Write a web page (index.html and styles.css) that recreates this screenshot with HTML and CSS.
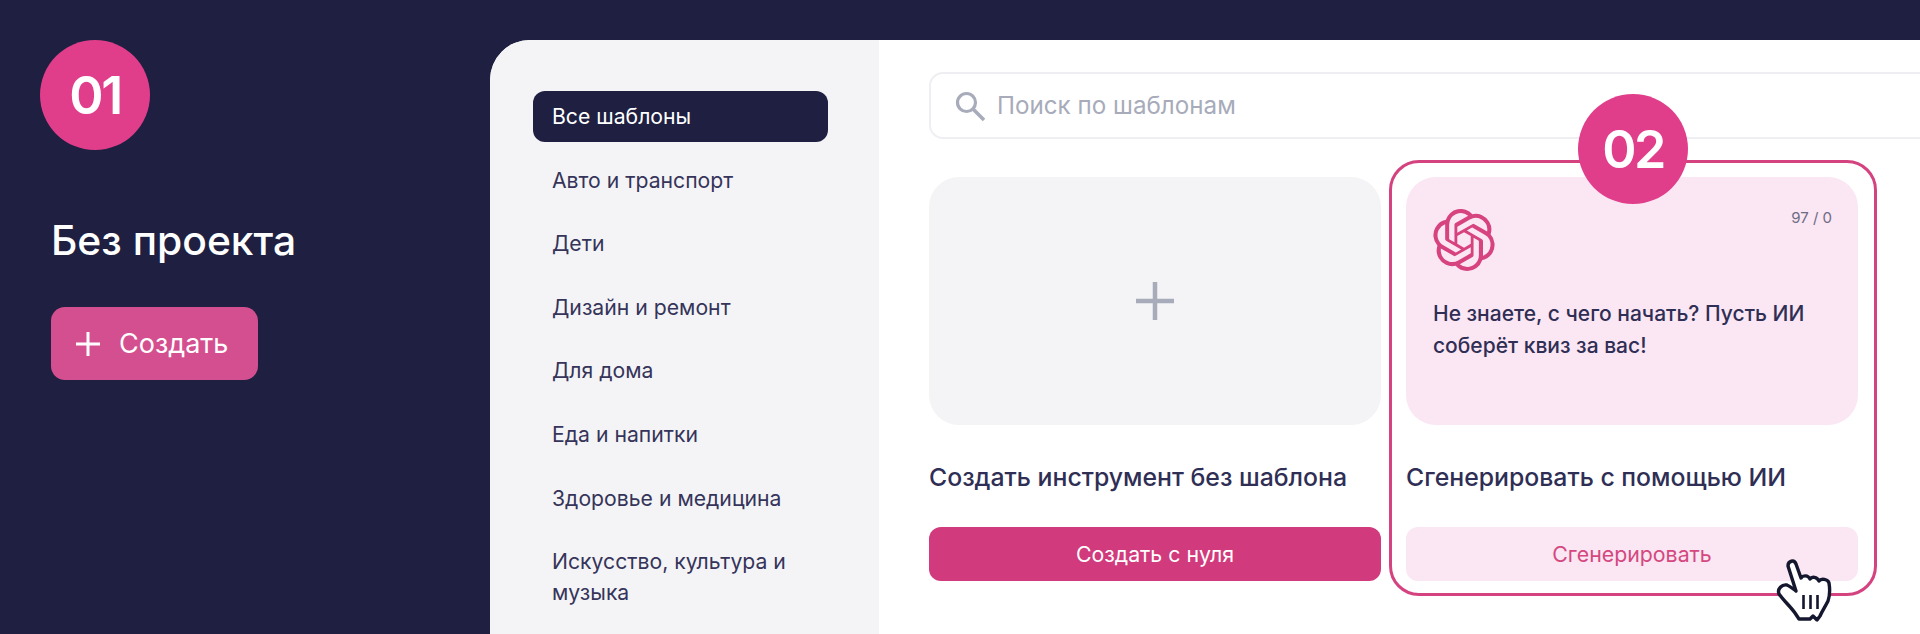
FILE: index.html
```html
<!DOCTYPE html>
<html lang="ru">
<head>
    <meta charset="UTF-8">
    <title>Без проекта</title>
    <link rel="stylesheet" href="styles.css">
</head>
<body>
    <div class="app">
        <aside class="project">
            <div class="step step-first">01</div>
            <h1>Без проекта</h1>
            <button class="create">
                <svg width="26" height="26" viewBox="0 0 26 26"><path d="M13 1v24M1 13h24" stroke="#fff" stroke-width="3" fill="none"/></svg>
                <span>Создать</span>
            </button>
        </aside>

        <main class="panel">
            <nav class="categories">
                <a class="category active">Все шаблоны</a>
                <a class="category">Авто и транспорт</a>
                <a class="category">Дети</a>
                <a class="category">Дизайн и ремонт</a>
                <a class="category">Для дома</a>
                <a class="category">Еда и напитки</a>
                <a class="category">Здоровье и медицина</a>
                <a class="category">Искусство, культура и музыка</a>
            </nav>

            <section class="content">
                <div class="search">
                    <svg width="32" height="32" viewBox="0 0 32 32"><circle cx="12.5" cy="12.5" r="9" stroke="#a7abba" stroke-width="3.2" fill="none"/><path d="M19.5 19.5L30 30" stroke="#a7abba" stroke-width="3.6" fill="none"/></svg>
                    <span>Поиск по шаблонам</span>
                </div>

                <div class="cards">
                    <article class="card">
                        <div class="preview preview-blank">
                            <svg width="38" height="38" viewBox="0 0 38 38"><path d="M19 0v38M0 19h38" stroke="#a7abba" stroke-width="4.5" fill="none"/></svg>
                        </div>
                        <h2>Создать инструмент без шаблона</h2>
                        <button class="action action-main">Создать с нуля</button>
                    </article>

                    <article class="card card-ai">
                        <div class="preview preview-ai">
                            <div class="preview-top">
                                <svg class="logo" width="62" height="62" viewBox="0 0 24 24"><path fill="#d6437f" d="M22.2819 9.8211a5.9847 5.9847 0 0 0-.5157-4.9108 6.0462 6.0462 0 0 0-6.5098-2.9A6.0651 6.0651 0 0 0 4.9807 4.1818a5.9847 5.9847 0 0 0-3.9977 2.9 6.0462 6.0462 0 0 0 .7427 7.0966 5.98 5.98 0 0 0 .511 4.9107 6.051 6.051 0 0 0 6.5146 2.9001A5.9847 5.9847 0 0 0 13.2599 24a6.0557 6.0557 0 0 0 5.7718-4.2058 5.9894 5.9894 0 0 0 3.9977-2.9001 6.0557 6.0557 0 0 0-.7475-7.0729zm-9.022 12.6081a4.4755 4.4755 0 0 1-2.8764-1.0408l.1419-.0804 4.7783-2.7582a.7948.7948 0 0 0 .3927-.6813v-6.7369l2.02 1.1686a.071.071 0 0 1 .038.052v5.5826a4.504 4.504 0 0 1-4.4945 4.4944zm-9.6607-4.1254a4.4708 4.4708 0 0 1-.5346-3.0137l.142.0852 4.783 2.7582a.7712.7712 0 0 0 .7806 0l5.8428-3.3685v2.3324a.0804.0804 0 0 1-.0332.0615L9.74 19.9502a4.4992 4.4992 0 0 1-6.1408-1.6464zM2.3408 7.8956a4.485 4.485 0 0 1 2.3655-1.9728V11.6a.7664.7664 0 0 0 .3879.6765l5.8144 3.3543-2.0201 1.1685a.0757.0757 0 0 1-.071 0l-4.8303-2.7865A4.504 4.504 0 0 1 2.3408 7.872zm16.5963 3.8558L13.1038 8.364 15.1192 7.2a.0757.0757 0 0 1 .071 0l4.8303 2.7913a4.4944 4.4944 0 0 1-.6765 8.1042v-5.6772a.79.79 0 0 0-.407-.667zm2.0107-3.0231l-.142-.0852-4.7735-2.7818a.7759.7759 0 0 0-.7854 0L9.409 9.2297V6.8974a.0662.0662 0 0 1 .0284-.0615l4.8303-2.7866a4.4992 4.4992 0 0 1 6.6802 4.66zM8.3065 12.863l-2.02-1.1638a.0804.0804 0 0 1-.038-.0567V6.0742a4.4992 4.4992 0 0 1 7.3757-3.4537l-.142.0805L8.704 5.459a.7948.7948 0 0 0-.3927.6813zm1.0976-2.3654l2.602-1.4998 2.6069 1.4998v2.9994l-2.5974 1.4997-2.6067-1.4997Z"/></svg>
                                <span class="counter">97 / 0</span>
                            </div>
                            <p>Не знаете, с чего начать? Пусть ИИ соберёт квиз за вас!</p>
                        </div>
                        <h2>Сгенерировать с помощью ИИ</h2>
                        <button class="action action-soft">Сгенерировать</button>

                        <div class="highlight"></div>
                        <div class="step step-second">02</div>
                        <svg class="cursor" width="60" height="66" viewBox="0 0 60 66">
                            <path d="M13 9C13 4 19 2 21 7L26 21C28 18 33 18 35 22C37 19 42 20 44 24C46 21 53 22 54 26C55 32 55 38 53 44C50 50 47 54 45 59L42 63L38 59L35 62H24L20 56C15 49 9 44 4 37C2 32 7 27 12 28C15 29 18 32 21 34Z" fill="#fff" stroke="#14172e" stroke-width="3.4" stroke-linejoin="round"/>
                            <path d="M28.5 38V52M35.500 38V52M42.500 38V52" stroke="#14172e" stroke-width="2.6" fill="none"/>
                        </svg>
                    </article>
                </div>
            </section>
        </main>
    </div>
</body>
</html>
```

FILE: styles.css
```css
* {
    margin: 0;
    padding: 0;
    box-sizing: border-box;
    font-family: 'Inter', 'Noto Sans', sans-serif;
}

body {
    height: 634px;
    overflow: hidden;
    background: #1e1f41;
}

.app {
    display: flex;
    height: 634px;
    padding-top: 40px;
}

button {
    border: none;
    cursor: pointer;
}

.project {
    width: 490px;
    flex-shrink: 0;
    padding-left: 40px;
}

.step {
    width: 110px;
    height: 110px;
    border-radius: 50%;
    background: #e03e8a;
    color: #fff;
    font-size: 52px;
    font-weight: 600;
    letter-spacing: -2.5px;
    display: flex;
    justify-content: center;
    align-items: center;
}

.project h1 {
    margin: 66px 0 0 11px;
    color: #fff;
    font-size: 40.800px;
    font-weight: 500;
    line-height: 48px;
}

.create {
    margin: 43px 0 0 11px;
    width: 207px;
    height: 73px;
    border-radius: 14px;
    background: #d44f8f;
    color: #fff;
    font-size: 27px;
    display: flex;
    align-items: center;
    gap: 18px;
    padding-left: 24px;
}

.panel {
    flex: 1;
    display: flex;
    background: #fff;
    border-top-left-radius: 40px;
    overflow: hidden;
}

.categories {
    width: 389px;
    flex-shrink: 0;
    padding: 51px 0 0 43px;
    background: #f4f4f6;
    display: flex;
    flex-direction: column;
    gap: 12.600px;
}

.category {
    width: 295px;
    padding: 10px 19px;
    border-radius: 12px;
    color: #36345a;
    font-size: 21.200px;
    line-height: 31px;
}

.category.active {
    background: #1e1f41;
    color: #fff;
}

.content {
    padding: 32px 0 0 51px;
    flex: 1;
    margin-left: -1px;
}

.search {
    width: 1100px;
    height: 67px;
    border: 2px solid #efeff3;
    border-radius: 14px;
    display: flex;
    align-items: center;
    gap: 11px;
    padding-left: 23px;
    color: #a7abba;
    font-size: 24.200px;
}

.cards {
    margin-top: 38px;
    display: grid;
    grid-template-columns: 452px 452px;
    gap: 25px;
}

.card {
    position: relative;
}

.preview {
    height: 248px;
    border-radius: 30px;
}

.preview-blank {
    background: #f4f4f6;
    display: flex;
    justify-content: center;
    align-items: center;
}

.preview-ai {
    background: #fbe6f3;
    padding: 32px 26px 0 27px;
}

.preview-top {
    display: flex;
    justify-content: space-between;
    align-items: flex-start;
}

.logo {
    display: block;
}

.counter {
    color: #6d6c85;
    font-size: 15px;
    line-height: 18px;
}

.preview-ai p {
    margin-top: 27px;
    width: 400px;
    color: #2f2e55;
    font-size: 21px;
    font-weight: 500;
    line-height: 32px;
}

.card h2 {
    margin-top: 35px;
    color: #2f2e55;
    font-size: 24.800px;
    font-weight: 500;
    line-height: 34px;
}

.action {
    display: block;
    width: 100%;
    height: 54px;
    margin-top: 33px;
    border-radius: 12px;
    font-size: 21.300px;
}

.action-main {
    background: #d13a7c;
    color: #fff;
}

.action-soft {
    background: #fbe6f3;
    color: #d4487f;
}

.highlight {
    position: absolute;
    top: -17px;
    left: -17px;
    right: -19px;
    bottom: -15px;
    border: 3px solid #d4437f;
    border-radius: 30px;
    pointer-events: none;
}

.step-second {
    position: absolute;
    top: -83px;
    left: 172px;
}

.cursor {
    position: absolute;
    right: 23px;
    bottom: -42px;
}
```
